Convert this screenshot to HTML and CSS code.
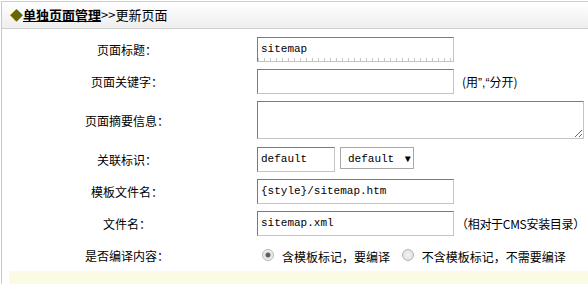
FILE: index.html
```html
<!doctype html>
<html lang="zh">
<head>
    <meta charset="UTF-8">
    <title>更新页面</title>
    <link rel="stylesheet" href="styles.css">
</head>
<body>
<div class="main">
    <div class="title">
        <span class="dot">◆</span><a href="#" class="nav">单独页面管理</a>&gt;&gt;更新页面
    </div>
    <table class="form">
        <tr>
            <td class="label">页面标题：</td>
            <td class="field"><input type="text" class="txt ruler" value="sitemap"></td>
        </tr>
        <tr>
            <td class="label">页面关键字：</td>
            <td class="field"><input type="text" class="txt" value=""><span class="tip">(用<span class="q">”,“</span>分开)</span></td>
        </tr>
        <tr class="tall">
            <td class="label">页面摘要信息：</td>
            <td class="field"><textarea class="area"></textarea></td>
        </tr>
        <tr>
            <td class="label">关联标识：</td>
            <td class="field"><input type="text" class="txt short" value="default"><span class="sel">default <i>▼</i></span></td>
        </tr>
        <tr>
            <td class="label">模板文件名：</td>
            <td class="field"><input type="text" class="txt" value="{style}/sitemap.htm"></td>
        </tr>
        <tr>
            <td class="label">文件名：</td>
            <td class="field"><input type="text" class="txt" value="sitemap.xml"><span class="tip tip-wide">（相对于CMS安装目录）</span></td>
        </tr>
        <tr>
            <td class="label">是否编译内容：</td>
            <td class="field">
                <span class="radio on"></span><span class="opt">含模板标记，要编译</span>
                <span class="radio"></span><span class="opt">不含模板标记，不需要编译</span>
            </td>
        </tr>
    </table>
    <div class="foot"></div>
</div>
</body>
</html>
```

FILE: styles.css
```css
* {
    padding: 0;
    margin: 0;
    border: 0;
}

body {
    font-family: "Noto Sans CJK SC", "Liberation Sans", sans-serif;
    font-size: 12px;
    color: #000;
    background: #fff;
    overflow: hidden;
}

.main {
    margin-left: 1px;
    border-left: 1px solid #c8c8c8;
    height: 284px;
}

.title {
    margin-top: 1px;
    height: 26px;
    line-height: 26px;
    border-top: 1px solid #cfcfcf;
    border-bottom: 1px solid #cfcfcf;
    background: linear-gradient(#ffffff, #eeeeee);
    padding-left: 8px;
    font-size: 13px;
}

.dot {
    color: #666600;
    font-size: 13px;
}

.nav {
    color: #000;
    font-weight: bold;
    text-decoration: underline;
}

.form {
    border-collapse: collapse;
    table-layout: fixed;
    margin-top: 4px;
    width: 100%;
}

.form td {
    height: 32px;
    padding: 0;
    vertical-align: middle;
    white-space: nowrap;
}

.form tr.tall td {
    height: 46px;
}

.form td.label {
    width: 250px;
    text-align: center;
}

.form td.field {
    padding-left: 5px;
}

.txt {
    width: 189px;
    height: 23px;
    padding: 0 3px;
    border: 1px solid;
    border-color: #7b7b7b #c4c4c4 #c4c4c4 #7b7b7b;
    font-family: "Liberation Mono", "DejaVu Sans Mono", monospace;
    font-size: 11px;
    vertical-align: middle;
    outline: none;
}

.ruler {
    background: repeating-linear-gradient(90deg, #c8c8c8 0, #c8c8c8 1px, transparent 1px, transparent 6px) left bottom / 100% 3px no-repeat;
}

.short {
    width: 70px;
}

.tip {
    margin-left: 8px;
    vertical-align: middle;
}

.tip-wide {
    margin-left: 2px;
    letter-spacing: -0.3px;
}

.q {
    font-family: "Liberation Sans", sans-serif;
}

.area {
    display: block;
    width: 325px;
    height: 36px;
    border: 1px solid;
    border-color: #7b7b7b #c4c4c4 #c4c4c4 #7b7b7b;
    resize: both;
}

.sel {
    display: inline-block;
    height: 22px;
    line-height: 22px;
    margin-left: 5px;
    margin-top: -3px;
    border: 1px solid #a8a8a8;
    box-sizing: border-box;
    width: 74px;
    padding-left: 7px;
    font-family: "Liberation Mono", "DejaVu Sans Mono", monospace;
    font-size: 11px;
    vertical-align: middle;
}

.sel i {
    font-style: normal;
    font-size: 10px;
    margin-left: 4px;
}

.radio {
    display: inline-block;
    width: 10px;
    height: 10px;
    margin-left: 5px;
    border: 1px solid #b5b5b5;
    border-radius: 50%;
    background: radial-gradient(#f4f4f4, #dcdcdc);
    vertical-align: middle;
    position: relative;
    top: -1px;
}

.radio.on {
    background: radial-gradient(#555 0, #666 2px, #e4e4e4 3px, #f2f2f2 5px);
}

.opt {
    margin-left: 8px;
    vertical-align: middle;
}

.opt + .radio {
    margin-left: 9px;
}

.foot {
    margin-left: 7px;
    height: 20px;
    background: #fbfbe3;
}
```
